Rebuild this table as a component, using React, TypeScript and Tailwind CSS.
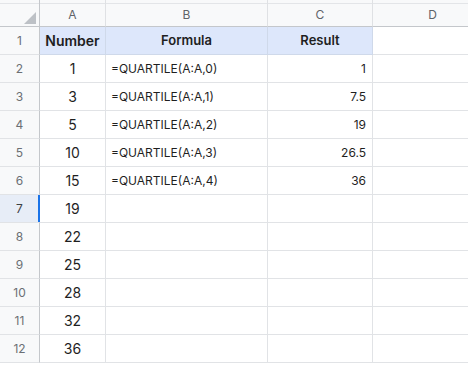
const cols = [
  { key: "A", w: "w-[66px]" },
  { key: "B", w: "w-[162px]" },
  { key: "C", w: "w-[105px]" },
  { key: "D", w: "w-[120px]" },
];

const numbers = [null, 1, 3, 5, 10, 15, 19, 22, 25, 28, 32, 36];

const formulas: Record<number, { f: string; r: string }> = {
  2: { f: "=QUARTILE(A:A,0)", r: "1" },
  3: { f: "=QUARTILE(A:A,1)", r: "7.5" },
  4: { f: "=QUARTILE(A:A,2)", r: "19" },
  5: { f: "=QUARTILE(A:A,3)", r: "26.5" },
  6: { f: "=QUARTILE(A:A,4)", r: "36" },
};

const HeaderRow = () => {
  return (
    <div className="flex h-[27px] bg-[#f8f9fa]">
      {/* corner */}
      <div className="relative w-[40px] shrink-0 border-r border-b border-r-[#c4c7cb] border-b-[#c4c7cb]">
        <div className="h-[3px]" />
        <div className="h-px bg-[#e3e5e8]" />
        <div className="absolute left-[24px] top-[12px] h-[12px] w-[12px] bg-[#bdc1c6] [clip-path:polygon(100%_0,100%_100%,0_100%)]" />
      </div>
      {cols.map((c) => (
        <div
          key={c.key}
          className={`${c.w} shrink-0 flex flex-col border-r border-b border-r-[#dfe1e4] border-b-[#c4c7cb]`}
        >
          <div className="h-[3px]" />
          <div className="h-px bg-[#e3e5e8]" />
          <div className="flex flex-1 items-center justify-center text-[12px] text-[#5f6368]">{c.key}</div>
        </div>
      ))}
    </div>
  );
};

const App = () => {
  const rows = Array.from({ length: 12 }, (_, i) => i + 1);
  return (
    <div className="h-[371px] w-[468px] overflow-hidden bg-white font-['Inter',sans-serif] text-[#1f1f1f]">
      <HeaderRow />
      {rows.map((r) => {
        const selected = r === 7;
        const isHead = r === 1;
        const fr = formulas[r];
        return (
          <div key={r} className="flex h-[28px]">
            {/* row number */}
            <div
              className={`relative flex w-[40px] shrink-0 items-center justify-center border-b border-r border-b-[#e1e3e6] border-r-[#c4c7cb] text-[12px] ${
                selected ? "bg-[#e7edf7] text-[#3c4043]" : "bg-[#f8f9fa] text-[#6b6f74]"
              }`}
            >
              {r}
              {selected && <div className="absolute right-[-1px] top-0 h-full w-[2px] bg-[#1a73e8]" />}
            </div>
            {/* A */}
            <div
              className={`flex w-[66px] shrink-0 items-center justify-center border-b border-r text-[14px] ${
                isHead
                  ? "bg-[#dde7fb] border-[#cfd9ea] font-semibold text-[13px]"
                  : "border-[#e1e3e6]"
              }`}
            >
              {isHead ? "Number" : numbers[r - 1]}
            </div>
            {/* B */}
            <div
              className={`flex w-[162px] shrink-0 items-center border-b border-r ${
                isHead
                  ? "justify-center bg-[#dde7fb] border-[#cfd9ea] font-semibold text-[13px]"
                  : "border-[#e1e3e6] pl-[5px] text-[12px]"
              }`}
            >
              {isHead ? "Formula" : fr ? fr.f : ""}
            </div>
            {/* C */}
            <div
              className={`flex w-[105px] shrink-0 items-center border-b border-r ${
                isHead
                  ? "justify-center bg-[#dde7fb] border-[#cfd9ea] font-semibold text-[13px]"
                  : "justify-end border-[#e1e3e6] pr-[6px] text-[12px]"
              }`}
            >
              {isHead ? "Result" : fr ? fr.r : ""}
            </div>
            {/* D */}
            <div className="w-[120px] shrink-0 border-b border-r border-[#e1e3e6]" />
          </div>
        );
      })}
    </div>
  );
};

export default App;
